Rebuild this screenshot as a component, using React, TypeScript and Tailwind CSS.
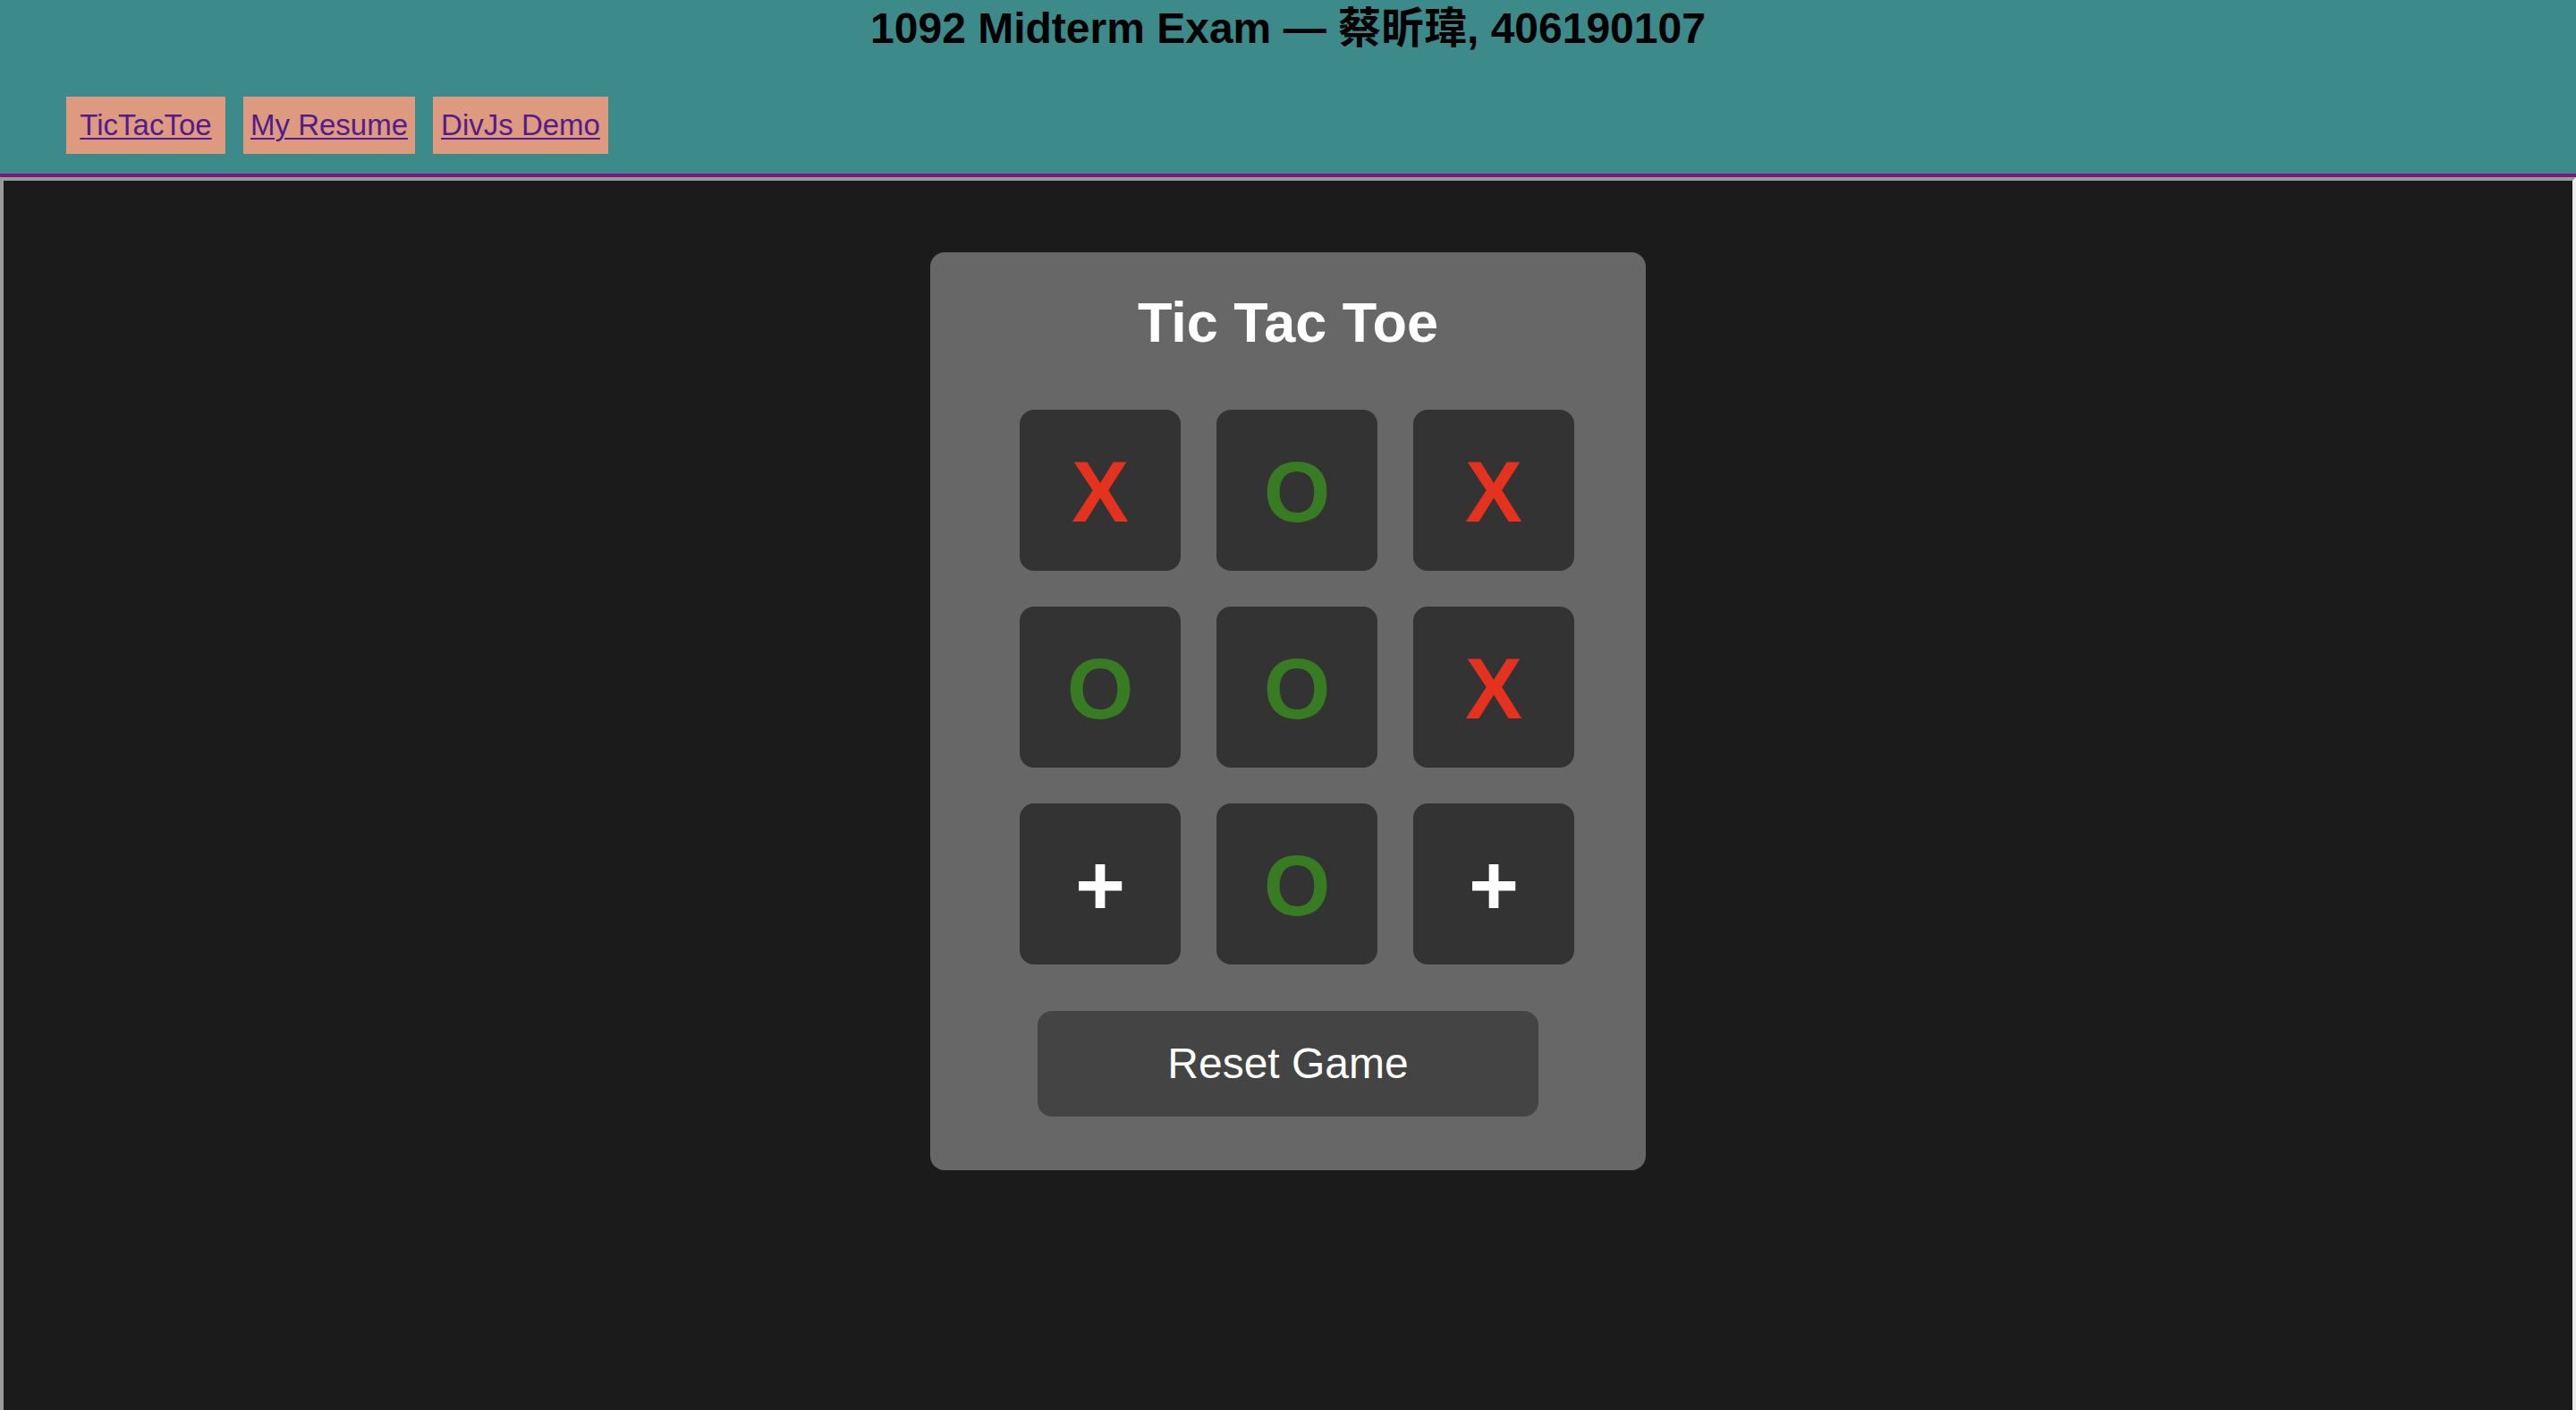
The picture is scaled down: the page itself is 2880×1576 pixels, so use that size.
import React from 'react';

type Mark = 'X' | 'O' | '+';

const board: Mark[] = ['X', 'O', 'X', 'O', 'O', 'X', '+', 'O', '+'];

const markColor: Record<Mark, string> = {
  X: 'text-[#e5321f]',
  O: 'text-[#377c22]',
  '+': 'text-white',
};

const links = [
  { label: 'TicTacToe', width: 'w-[178px]' },
  { label: 'My Resume', width: 'w-[192px]' },
  { label: 'DivJs Demo', width: 'w-[196px]' },
];

const App: React.FC = () => {
  return (
    <div className="min-h-screen bg-[#ececec] font-['Liberation_Sans','Noto_Sans_CJK_TC',Arial,sans-serif]">
      {/* Header */}
      <header className="border-b-4 border-[#7b1a7e] bg-[#3c8a8a] pt-[4px] pb-[22px]">
        <h1 className="text-center text-[48px] font-bold leading-[56px] text-black">
          1092 Midterm Exam — 蔡昕瑋, 406190107
        </h1>
        <nav className="mt-[48px] flex gap-[20px] pl-[74px]">
          {links.map((link) => (
            <a
              key={link.label}
              href="#"
              className={`flex h-16 items-center justify-center bg-[#dd9a7e] text-[33px] leading-[38px] text-[#551a8b] underline decoration-2 underline-offset-[3px] ${link.width}`}
            >
              {link.label}
            </a>
          ))}
        </nav>
      </header>

      {/* Main */}
      <main className="h-[1400px] border-4 border-t-[#9a9a9a] border-l-[#9a9a9a] border-r-[#ececec] border-b-[#ececec] bg-[#1b1b1b] pt-[80px]">
        <div className="mx-auto flex w-[800px] flex-col items-center rounded-2xl bg-[#676767] pt-[42px] pb-[60px]">
          <h2 className="text-[63px] font-bold leading-[72px] text-white">Tic Tac Toe</h2>
          <div className="mt-[62px] ml-[20px] grid grid-cols-[repeat(3,180px)] gap-[40px]">
            {board.map((mark, i) => (
              <button
                key={i}
                className={`flex h-[180px] w-[180px] items-center justify-center rounded-2xl bg-[#333333] pt-[4px] text-[96px] font-bold leading-none ${markColor[mark]}`}
              >
                {mark}
              </button>
            ))}
          </div>
          <button className="mt-[52px] h-[118px] w-[560px] rounded-2xl bg-[#444444] text-[48px] text-white">
            Reset Game
          </button>
        </div>
      </main>
    </div>
  );
};

export default App;
